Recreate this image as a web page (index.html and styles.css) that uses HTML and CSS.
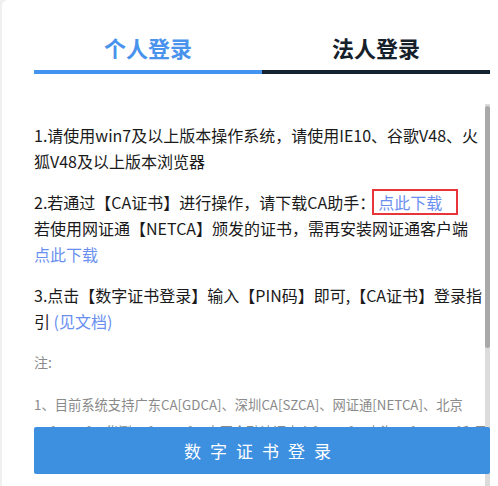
FILE: index.html
```html
<!DOCTYPE html>
<html lang="zh-CN">
<head>
  <meta charset="UTF-8" />
  <title>数字证书登录</title>
  <meta name="viewport" content="width=device-width, initial-scale=1.0" />
  <link rel="stylesheet" href="styles.css">
</head>
<body>

  <div class="card">
    <div class="tabs">
      <div class="tab active">个人登录</div>
      <div class="tab">法人登录</div>
    </div>

    <div class="panel">
      <div class="tips">
        <p>1.请使用win7及以上版本操作系统，请使用IE10、谷歌V48、火狐V48及以上版本浏览器</p>
        <p>2.若通过【CA证书】进行操作，请下载CA助手：<a class="link boxed" href="#">点此下载</a><br>若使用网证通【NETCA】颁发的证书，需再安装网证通客户端<br><a class="link" href="#">点此下载</a></p>
        <p>3.点击【数字证书登录】输入【PIN码】即可,【CA证书】登录指引 <a class="link" href="#">(见文档)</a></p>
        <p class="note-title">注:</p>
        <p class="note">1、目前系统支持广东CA[GDCA]、深圳CA[SZCA]、网证通[NETCA]、北京CA[BJCA]、华测CA[HNCA]、中国金融认证中心[CFCA]、上海CA[SHECA]和天威诚信CA[iTrusChina]颁发的数字证书。</p>
        <p class="note">2、如证书无法识别，请检查证书驱动是否安装正确，或联系证书颁发机构。</p>
      </div>

      <!-- scrollbar drawn by hand, the native one is hidden -->
      <div class="scroll-track"><div class="scroll-thumb"></div></div>

      <button class="login-btn">数字证书登录</button>
    </div>
  </div>

</body>
</html>
```

FILE: styles.css
```css
html, body {
  margin: 0;
  padding: 0;
}

body {
  font-family: "Noto Sans CJK SC", "Noto Sans", sans-serif;
  background-color: #f0f0f0;
  color: #1a1a1a;
}

.card {
  margin-left: 2px;
  height: 486px;
  background: #ffffff;
  border-top-left-radius: 6px;
  padding: 24px 8px 0 32px;
  box-sizing: border-box;
}

.tabs {
  display: flex;
}

.tab {
  flex: 1;
  text-align: center;
  font-size: 22px;
  font-weight: bold;
  line-height: 46px;
  color: #15202b;
  border-bottom: 4px solid #132332;
}

.tab.active {
  color: #4a93ec;
  border-bottom-color: #4393f0;
}

.panel {
  position: relative;
  margin-top: 30px;
}

.tips {
  height: 382px;
  overflow-y: auto;
  scrollbar-width: none;
  padding: 18px 2px 80px 0;
  box-sizing: border-box;
  font-size: 16px;
  line-height: 26px;
}

.tips::-webkit-scrollbar {
  display: none;
}

.scroll-track {
  position: absolute;
  top: 0;
  right: 0;
  width: 5px;
  height: 382px;
  background: #dcdcdc;
}

.scroll-thumb {
  margin-top: 2px;
  height: 242px;
  background: #a9a9a9;
  border-radius: 3px;
}

.tips p {
  margin: 0 0 15px;
}

.link {
  color: #6a8ff0;
  text-decoration: none;
}

.boxed {
  display: inline-block;
  vertical-align: top;
  box-sizing: border-box;
  height: 26px;
  margin-left: -3px;
  padding: 0 14px 0 4px;
  border: 2px solid #e8353a;
  line-height: 22px;
}

.tips .note-title {
  font-size: 14px;
  line-height: 27px;
  color: #8a8a8a;
  margin-top: 14px;
}

.tips .note {
  font-size: 13.3px;
  line-height: 27px;
  color: #8a8a8a;
}

.login-btn {
  position: absolute;
  left: 0;
  right: 0;
  top: 323px;
  height: 47px;
  border: none;
  border-radius: 2px;
  background-color: #3d8fdf;
  color: #ffffff;
  font-family: inherit;
  font-size: 17px;
  letter-spacing: 9px;
  cursor: pointer;
}
```
